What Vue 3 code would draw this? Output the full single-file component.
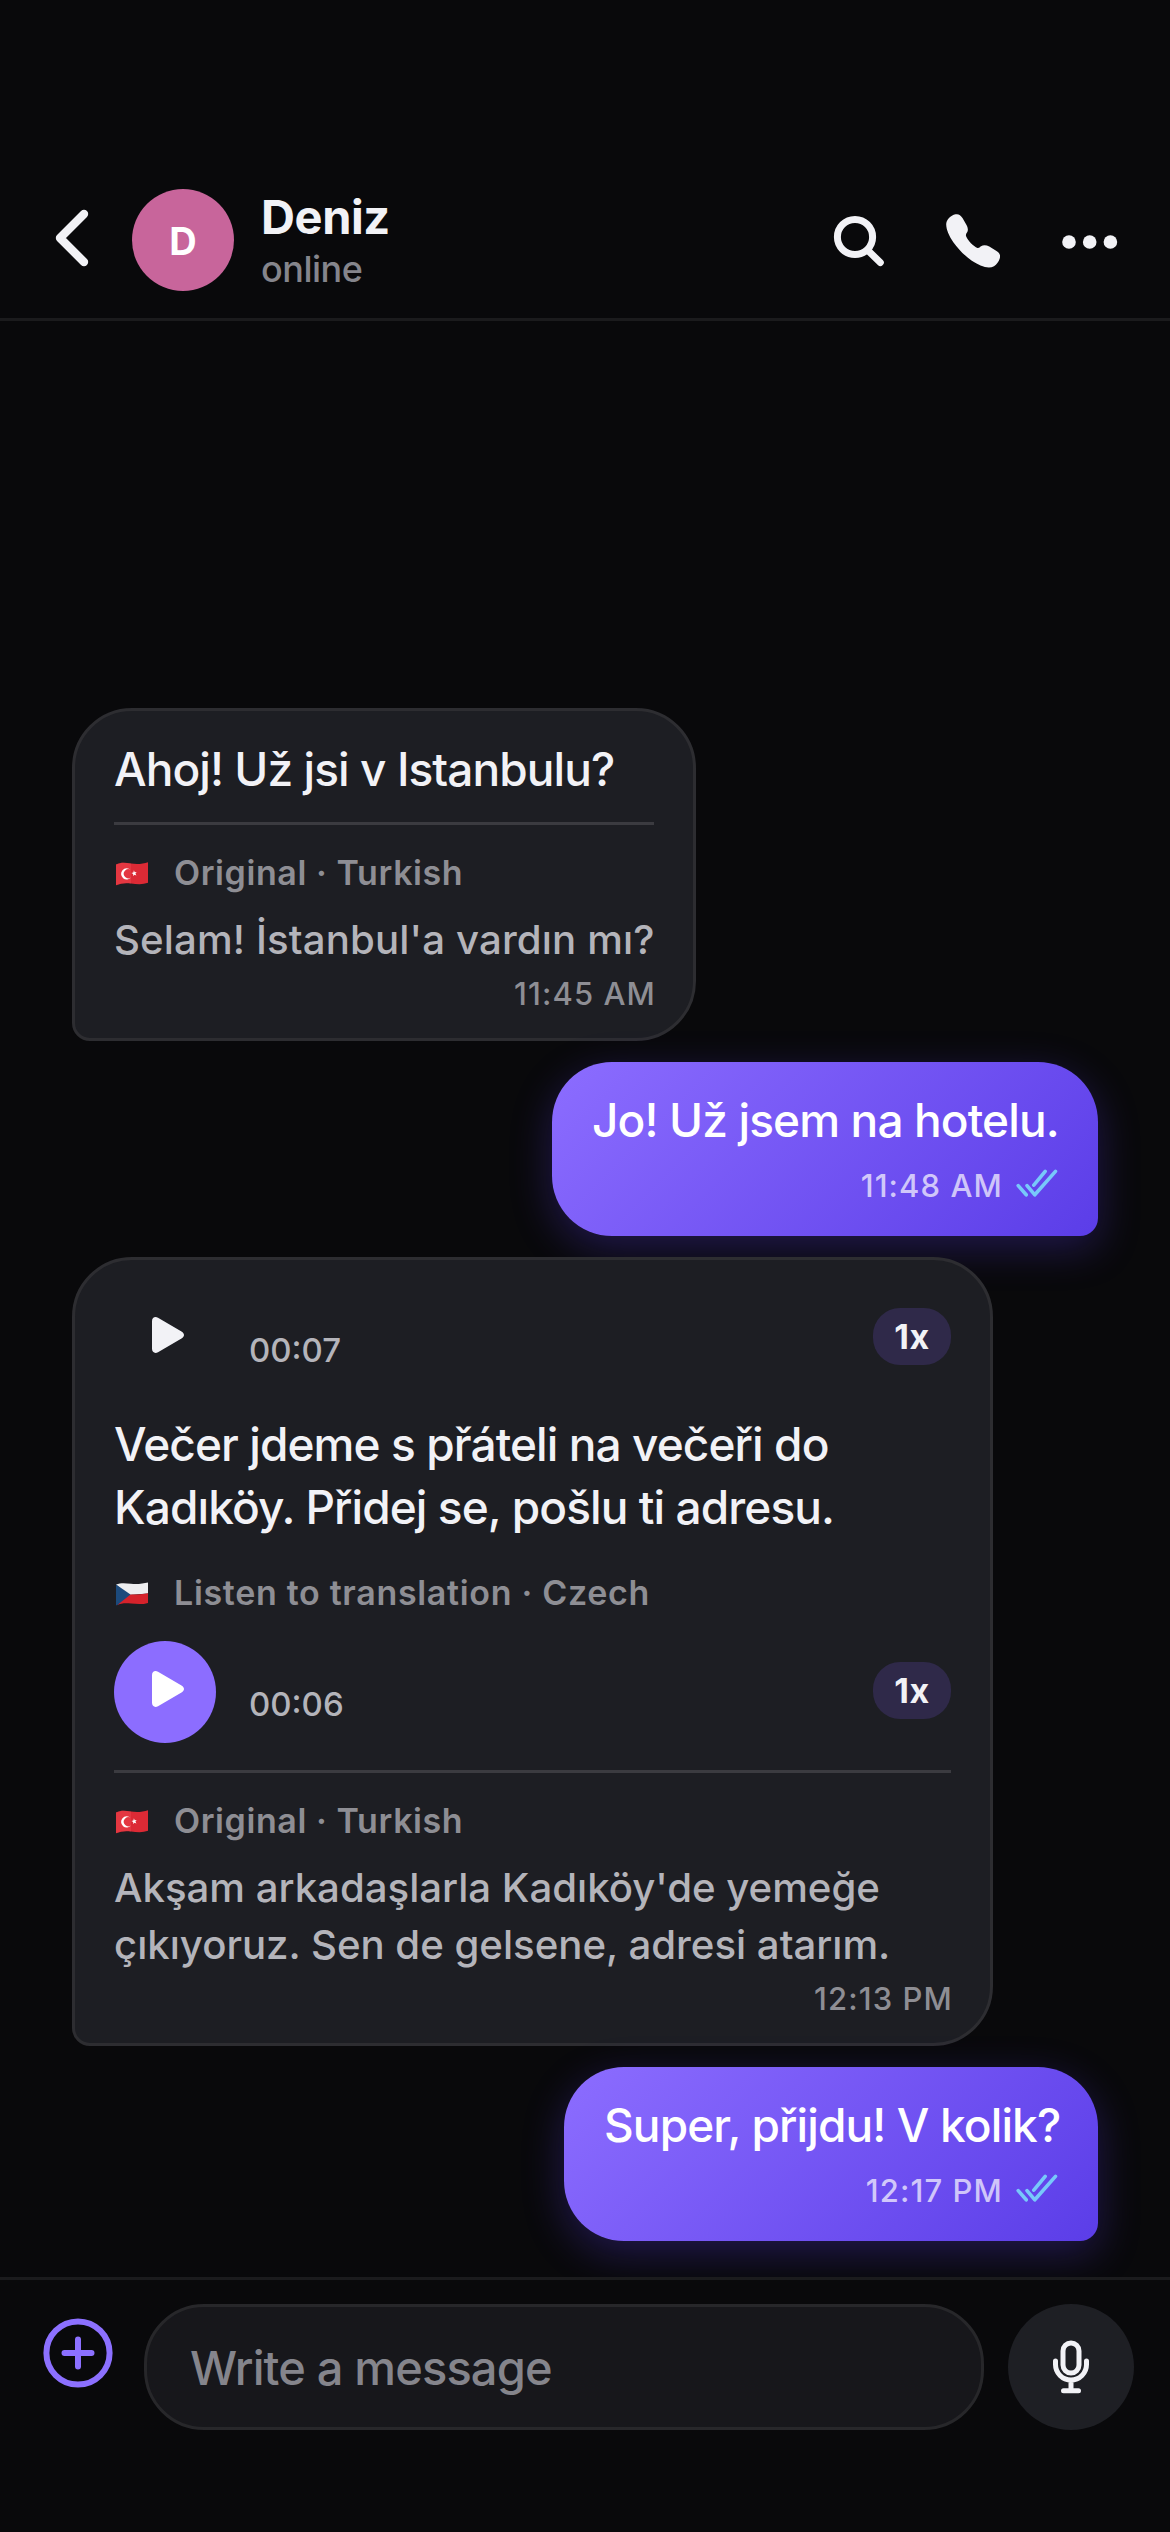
<script setup>
const messages = [
  {
    id: 1,
    side: 'in',
    size: 'short',
    blocks: [
      { type: 'text', text: 'Ahoj! Už jsi v Istanbulu?' },
      { type: 'divider' },
      { type: 'label', flag: 'tr', text: 'Original · Turkish' },
      { type: 'original', text: "Selam! İstanbul'a vardın mı?" }
    ],
    time: '11:45 AM'
  },
  {
    id: 2,
    side: 'out',
    size: 'hotel',
    blocks: [{ type: 'text', text: 'Jo! Už jsem na hotelu.' }],
    time: '11:48 AM'
  },
  {
    id: 3,
    side: 'in',
    size: 'voice',
    blocks: [
      { type: 'player', variant: 'plain', duration: '00:07' },
      { type: 'text', text: 'Večer jdeme s přáteli na večeři do Kadıköy. Přidej se, pošlu ti adresu.' },
      { type: 'label', flag: 'cz', text: 'Listen to translation · Czech' },
      { type: 'player', variant: 'accent', duration: '00:06' },
      { type: 'divider' },
      { type: 'label', flag: 'tr', text: 'Original · Turkish' },
      { type: 'original', text: "Akşam arkadaşlarla Kadıköy'de yemeğe çıkıyoruz. Sen de gelsene, adresi atarım." }
    ],
    time: '12:13 PM'
  },
  {
    id: 4,
    side: 'out',
    size: 'super',
    blocks: [{ type: 'text', text: 'Super, přijdu! V kolik?' }],
    time: '12:17 PM'
  }
]
</script>

<template>
  <div class="screen">
    <header class="header">
      <svg class="back" viewBox="0 0 34 58" fill="none">
        <path d="M29 5 5 29l24 24" stroke="#f2f2f6" stroke-width="8.4" stroke-linecap="round" stroke-linejoin="round" />
      </svg>
      <div class="avatar">D</div>
      <div class="who">
        <div class="name">Deniz</div>
        <div class="status">online</div>
      </div>
      <div class="actions">
        <svg class="search" viewBox="0 0 52 52" fill="none" stroke="#f2f2f6" stroke-width="7" stroke-linecap="round">
          <circle cx="22" cy="22" r="17.6" />
          <path d="M35.5 36 47.3 47.6" />
        </svg>
        <svg class="phone" viewBox="0 0 54 54">
          <path
            d="M9.5.3C12.5-.3 14.5.8 16.5 4l4 7c1.8 3.3 1.7 6 .5 7.6-1 1.4-1.400 2.400-.8 3.800 1.600 4.100 7.300 9.900 11.300 11.500 1.300.4 2.300-.7 3.500-1.600 2.300-1.500 5.300-1.300 8.300.3l7.200 4.400c3.300 2 4.100 4.300 3.300 7.300-1 3.300-3 6.300-5.800 7.900-3.500 2-8 1.600-13.500-.7-10-4.200-20-13.300-27-23C3 22 .3 15.800.2 10.500.1 6 4.500 1.500 9.500.3Z"
            fill="#f2f2f6"
          />
        </svg>
        <svg class="dots" viewBox="0 0 56 14" fill="#f2f2f6">
          <circle cx="7" cy="7" r="6.8" />
          <circle cx="27.7" cy="7" r="6.8" />
          <circle cx="48.4" cy="7" r="6.8" />
        </svg>
      </div>
    </header>

    <main class="chat">
      <article v-for="m in messages" :key="m.id" class="bubble" :class="[m.side, m.size]">
        <template v-for="(b, i) in m.blocks" :key="i">
          <p v-if="b.type === 'text'" class="text">{{ b.text }}</p>
          <hr v-else-if="b.type === 'divider'" class="divider" />
          <div v-else-if="b.type === 'label'" class="label">
            <svg v-if="b.flag === 'tr'" class="flag" viewBox="0 0 32 24">
              <path d="M0 2.5C5 .2 9 .6 15 1.6S27 2 32 .3v20.500c-5 1.900-11 1.400-17 .7S5 21.300 0 23.300Z" fill="#dc2a35" />
              <path d="M0 2.500C5 .2 9 .6 15 1.600v19.900C9 20.600 5 21.300 0 23.300Z" fill="#ee4650" opacity=".45" />
              <path d="M14.600 7.900a5.600 5.600 0 1 0 .6 7.300 4.500 4.500 0 1 1-.6-7.300Z" fill="#fff" />
              <path d="m17.900 8.300.8 2 2-.2-1.300 1.500 1 1.800-1.900-.7-1.400 1.400.1-2-1.800-1 2-.6Z" fill="#fff" />
            </svg>
            <svg v-else class="flag" viewBox="0 0 32 24">
              <path d="M0 2.500C5 .6 9 1 15 1.800S27 1.600 32 .5v11L12 13Z" fill="#eeeef0" />
              <path d="M11 12.800c7-.6 14 .2 21-1.500v9.600c-5 1.700-11 1.300-17 .7S5 21.400 1 23.300Z" fill="#d5222b" />
              <path d="M0 2.500 14.500 12.600 1 23.300H0Z" fill="#1c4a7c" />
            </svg>
            <span>{{ b.text }}</span>
          </div>
          <p v-else-if="b.type === 'original'" class="original">{{ b.text }}</p>
          <div v-else class="player" :class="b.variant">
            <div class="play">
              <svg viewBox="0 0 32 36">
                <path d="M0 4.200C0 .7 3 -.9 6 .8l23.500 13.700c3.300 1.900 3.300 5.100 0 7L6 35.200C3 36.900 0 35.300 0 31.800Z" />
              </svg>
            </div>
            <div class="duration">{{ b.duration }}</div>
            <div class="speed">1x</div>
          </div>
        </template>
        <div class="meta">
          <span>{{ m.time }}</span>
          <svg v-if="m.side === 'out'" class="read" viewBox="0 0 42 28" fill="none" stroke="#78c8fa" stroke-width="3.6" stroke-linecap="round" stroke-linejoin="round">
            <path d="m2.200 16.600 8 9.200M11 16.600l7.800 9.200L39.500 2.400M29.200 2.400 17.800 16.200" />
          </svg>
        </div>
      </article>
    </main>

    <footer class="composer">
      <svg class="plus" viewBox="0 0 70 70" fill="none" stroke="#8c70ff" stroke-width="6" stroke-linecap="round">
        <circle cx="35" cy="35" r="31.6" />
        <path d="M35 21.500v27M21.500 35h27" />
      </svg>
      <div class="field">Write a message</div>
      <div class="mic">
        <svg viewBox="0 0 38 54" fill="none" stroke="#f2f2f6" stroke-width="5" stroke-linecap="round">
          <rect x="11" y="3" width="16" height="30" rx="8" />
          <path d="M3.500 21v3.500a15.500 15.500 0 0 0 31 0V21M19 40.500v10M11.500 50.700h15" />
        </svg>
      </div>
    </footer>
  </div>
</template>

<style>
body {
  background: #09090b;
}
</style>

<style scoped>
.screen {
  display: flex;
  flex-direction: column;
  width: 1170px;
  height: 2532px;
  overflow: hidden;
  background: #09090b;
  font-family: Inter, "Noto Sans", sans-serif;
  font-weight: 450;
  color: #f2f2f6;
}

svg {
  display: block;
  flex: none;
}

p {
  margin: 0;
}

.header {
  box-sizing: border-box;
  flex: none;
  display: flex;
  align-items: center;
  height: 321px;
  padding: 162px 52px 0 55px;
  border-bottom: 3px solid #1b1b1d;
}

.back {
  width: 34px;
  height: 58px;
  margin: 0 43px 4px 0;
}

.avatar {
  width: 102px;
  height: 102px;
  border-radius: 50%;
  background: #c8659b;
  color: #fff;
  font-size: 38px;
  font-weight: 650;
  line-height: 105px;
  text-align: center;
}

.who {
  margin-left: 27px;
}

.name {
  font-size: 47px;
  font-weight: 650;
  line-height: 58px;
  letter-spacing: -0.4px;
}

.status {
  font-size: 36px;
  line-height: 47px;
  letter-spacing: -0.5px;
  color: #85858c;
}

.actions {
  display: flex;
  align-items: center;
  margin-left: auto;
}

.search {
  width: 52px;
  height: 52px;
  margin: 2px 61px 0 0;
}

.phone {
  width: 54px;
  height: 54px;
  margin: 2px 62px 0 0;
}

.dots {
  width: 56px;
  height: 14px;
  margin-top: 3px;
}

.chat {
  flex: 1;
  min-height: 0;
  overflow: hidden;
  display: flex;
  flex-direction: column;
  justify-content: flex-end;
  gap: 21px;
  padding: 0 72px 36px;
}

.bubble {
  position: relative;
  box-sizing: border-box;
  flex: none;
}

.in {
  align-self: flex-start;
  padding: 27px 39px;
  border: 3px solid #2d2d31;
  border-radius: 60px 60px 60px 18px;
  background: #1d1e23;
}

.out {
  align-self: flex-end;
  padding: 27px 42px 33px;
  border-radius: 60px 60px 18px 60px;
  background: linear-gradient(135deg, #8c6dff, #5b3de8);
  box-shadow: 0 12px 42px rgba(91, 61, 232, 0.3);
}

.short {
  width: 624px;
}

.voice {
  width: 921px;
}

.hotel {
  width: 546px;
}

.super {
  width: 534px;
}

.text {
  font-size: 46px;
  line-height: 63px;
  letter-spacing: -0.93px;
}

.voice .text {
  margin-top: 24px;
  letter-spacing: -0.91px;
}

.out .text {
  margin-left: -2px;
  color: #fff;
  letter-spacing: -0.87px;
  white-space: nowrap;
}

.divider {
  height: 3px;
  margin: 21px 0 0;
  border: 0;
  background: #3b3b40;
}

.voice .divider {
  margin-top: 27px;
}

.label {
  display: flex;
  align-items: center;
  height: 45px;
  margin-top: 25px;
  font-size: 34px;
  font-weight: 630;
  letter-spacing: 0.58px;
  color: #8e8e94;
}

.text + .label {
  margin: 31px 0 26px;
  letter-spacing: 0.68px;
}

.flag {
  width: 32px;
  height: 24px;
  margin: 2px 26px 0 2px;
}

.original {
  margin-top: 16px;
  font-size: 40.2px;
  line-height: 57px;
  letter-spacing: 0.12px;
  color: #b4b4ba;
}

.short .original {
  white-space: nowrap;
}

.voice .original {
  letter-spacing: -0.02px;
}

.player {
  display: flex;
  align-items: center;
  height: 102px;
}

.play {
  display: flex;
  width: 102px;
  height: 102px;
  border-radius: 50%;
}

.play svg {
  width: 32px;
  height: 36px;
  margin: 30px 0 0 38px;
  fill: #f2f2f6;
}

.accent .play {
  background: #8c6dff;
}

.accent .play svg {
  fill: #fff;
}

.duration {
  margin: 24px 0 0 33px;
  font-size: 33px;
  line-height: 44px;
  color: #b4b4ba;
}

.speed {
  width: 78px;
  height: 57px;
  margin: 0 0 3px auto;
  border-radius: 27px;
  background: #2f2949;
  font-size: 34px;
  font-weight: 750;
  line-height: 58px;
  letter-spacing: 0.5px;
  text-align: center;
  font-feature-settings: "calt" 0;
}

.meta {
  display: flex;
  justify-content: flex-end;
  align-items: center;
  height: 36px;
  margin: 7px -2px 0 0;
  font-size: 31px;
  font-weight: 530;
  letter-spacing: 1.1px;
  color: #8e8e94;
}

.out .meta {
  margin: 15px -2px 0 0;
  color: rgba(255, 255, 255, 0.7);
}

.read {
  width: 42px;
  height: 28px;
  margin: -4px 0 0 13px;
}

.composer {
  position: relative;
  box-sizing: border-box;
  flex: none;
  display: flex;
  align-items: flex-start;
  height: 255px;
  padding: 24px 36px 0 43px;
  border-top: 3px solid #1b1b1d;
  background: #09090b;
}

.plus {
  width: 70px;
  height: 70px;
  margin: 14px 31px 0 0;
}

.field {
  box-sizing: border-box;
  flex: 1;
  height: 126px;
  padding-left: 43px;
  margin-right: 24px;
  border: 3px solid #27272a;
  border-radius: 60px;
  background: #17171b;
  color: #85858c;
  font-size: 47px;
  line-height: 121px;
  letter-spacing: -0.85px;
}

.mic {
  display: flex;
  width: 126px;
  height: 126px;
  border-radius: 50%;
  background: #1e1f24;
}

.mic svg {
  width: 38px;
  height: 54px;
  margin: 36px 0 0 44px;
}
</style>
